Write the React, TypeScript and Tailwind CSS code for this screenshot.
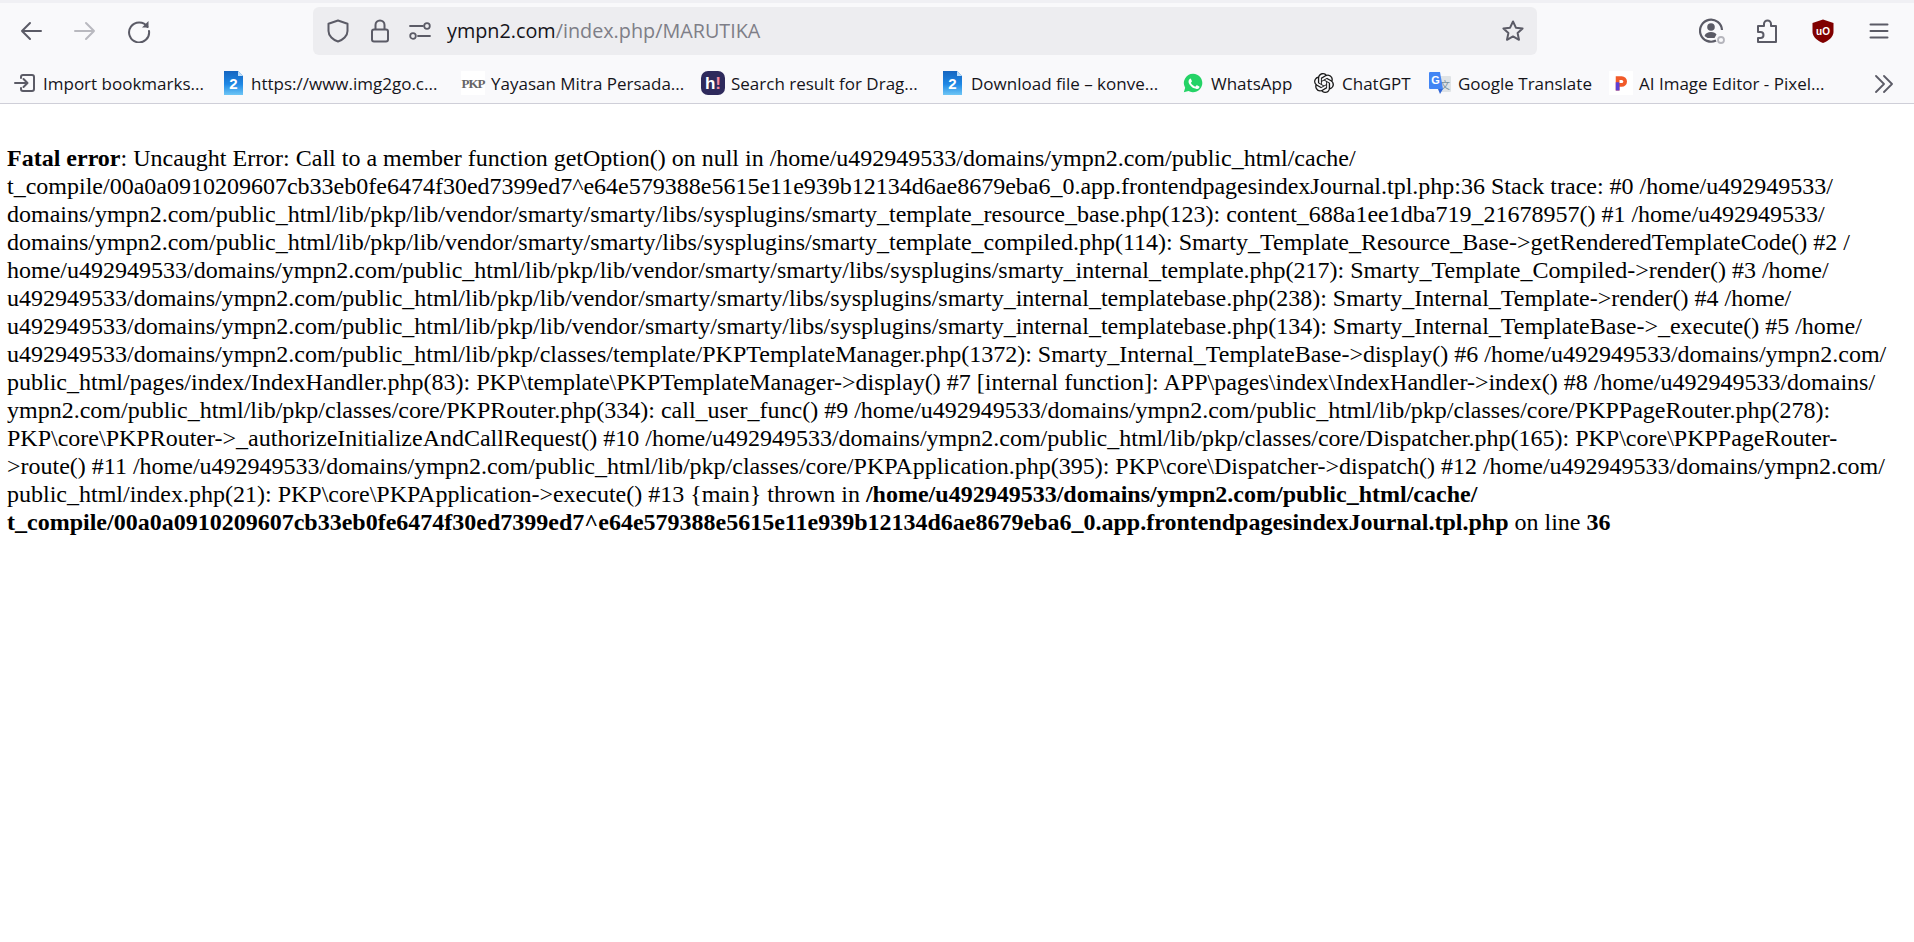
import React from 'react';
import { SiOpenai } from 'react-icons/si';

const stroke = '#5b5b66';

const Doc2Icon = () => (
  <svg viewBox="0 0 19 24" className="w-[19px] h-6 shrink-0">
    <defs>
      <linearGradient id="docBlue" x1="0" y1="0" x2="0" y2="1">
        <stop offset="0" stopColor="#1565c0" />
        <stop offset="0.55" stopColor="#1e88e5" />
        <stop offset="1" stopColor="#6ec6f5" />
      </linearGradient>
    </defs>
    <path d="M0 0h14l5 5v19H0z" fill="url(#docBlue)" />
    <path d="M14 0l5 5h-5z" fill="#bbdefb" />
    <text x="9.5" y="18" textAnchor="middle" fontSize="15" fontWeight="700" fill="#fff" fontFamily="Liberation Sans, sans-serif">2</text>
  </svg>
);

const bookmarks = [
  { label: 'Import bookmarks...', icon: 'import', box: 'w-[210px] gap-[7px]' },
  { label: 'https://www.img2go.c...', icon: 'doc', box: 'w-[237px] gap-[8px]' },
  { label: 'Yayasan Mitra Persada...', icon: 'pkp', box: 'w-[240px] gap-[6px]' },
  { label: 'Search result for Drag...', icon: 'hi', box: 'w-[242px] gap-[6px]' },
  { label: 'Download file – konve...', icon: 'doc', box: 'w-[240px] gap-[9px]' },
  { label: 'WhatsApp', icon: 'wa', box: 'w-[131px] gap-[8px]' },
  { label: 'ChatGPT', icon: 'gpt', box: 'w-[114px] gap-[8px]' },
  { label: 'Google Translate', icon: 'gt', box: 'w-[181px] gap-[6px]' },
  { label: 'AI Image Editor - Pixel...', icon: 'p', box: 'w-[240px] gap-[6px]' },
];

const BookmarkIcon = ({ kind }: { kind: string }) => {
  if (kind === 'import') {
    return (
      <svg viewBox="0 0 22 20" className="w-[22px] h-5 shrink-0" fill="none" stroke={stroke} strokeWidth="2" strokeLinecap="round" strokeLinejoin="round">
        <path d="M9 2h9a2 2 0 0 1 2 2v12a2 2 0 0 1-2 2H9a2 2 0 0 1-2-2v-1M7 5V4a2 2 0 0 1 2-2" />
        <path d="M1 10h12M9.5 6l4 4-4 4" />
      </svg>
    );
  }
  if (kind === 'doc') return <Doc2Icon />;
  if (kind === 'pkp') {
    return (
      <span className="w-6 h-6 shrink-0 bg-white flex items-center justify-center text-[13px] tracking-[-1px] leading-none font-bold text-[#666] font-['Liberation_Serif',serif]">PKP</span>
    );
  }
  if (kind === 'hi') {
    return (
      <span className="w-6 h-6 shrink-0 rounded-[7px] bg-[#2e2a5c] flex items-center justify-center text-[17px] leading-none font-bold text-white font-['Liberation_Sans',sans-serif]">
        h<span className="text-[#f58ba0]">!</span>
      </span>
    );
  }
  if (kind === 'wa') {
    return (
      <svg viewBox="0 0 24 24" className="w-5 h-5 shrink-0">
        <path d="M12 1a11 11 0 0 0-9.4 16.6L1 23l5.600-1.500A11 11 0 1 0 12 1z" fill="#25d366" />
        <path d="M8.600 6.600c-.3 0-.8.1-1.100.6-.4.5-1.300 1.400-1.300 3.200s1.300 3.600 1.500 3.800c.2.2 2.600 4 6.300 5.400 3 1.200 3.700.9 4.400.9.700-.1 2.100-.9 2.400-1.700.3-.8.3-1.600.2-1.700-.1-.2-.3-.3-.7-.5l-2.500-1.200c-.4-.1-.6-.2-.9.2l-1.200 1.400c-.2.3-.4.3-.8.1-1.100-.5-2.300-1-3.600-2.300-1-.9-1.600-2-1.800-2.400-.2-.4 0-.6.2-.8l.9-1.100c.2-.3.2-.5.100-.8l-1.200-2.800c-.3-.7-.6-.7-.9-.7z" fill="#fff" transform="translate(1.2 1.2) scale(0.88)" />
      </svg>
    );
  }
  if (kind === 'gpt') {
    return <SiOpenai className="w-5 h-5 shrink-0 text-[#1a1a1a]" />;
  }
  if (kind === 'gt') {
    return (
      <svg viewBox="0 0 24 24" className="w-6 h-6 shrink-0">
        <path d="M10 5h12a1 1 0 0 1 1 1v14a1 1 0 0 1-1 1H11z" fill="#dfe3e6" />
        <text x="17" y="18" textAnchor="middle" fontSize="10" fill="#78909c" fontFamily="Noto Sans CJK SC, sans-serif">文</text>
        <path d="M2 1h10l3 17H2a1 1 0 0 1-1-1V2a1 1 0 0 1 1-1z" fill="#4285f4" />
        <path d="M10 18h5l-3 5z" fill="#3367d6" />
        <text x="7.5" y="13" textAnchor="middle" fontSize="11" fontWeight="700" fill="#fff" fontFamily="Liberation Sans, sans-serif">G</text>
      </svg>
    );
  }
  return (
    <span className="w-6 h-6 shrink-0 bg-white flex items-center justify-center">
      <svg viewBox="0 0 24 24" className="w-[18px] h-5">
        <path d="M5 3h8a7 7 0 0 1 0 14h-3v5H5z" fill="#f15a29" />
        <path d="M5 11h5v11H5z" fill="#5b3fd6" />
        <path d="M10 8h3a2 2 0 0 1 0 4h-3z" fill="#fff" />
      </svg>
    </span>
  );
};

const lines: React.ReactNode[] = [
  <><b>Fatal error</b>: Uncaught Error: Call to a member function getOption() on null in /home/u492949533/domains/ympn2.com/public_html/cache/</>,
  't_compile/00a0a0910209607cb33eb0fe6474f30ed7399ed7^e64e579388e5615e11e939b12134d6ae8679eba6_0.app.frontendpagesindexJournal.tpl.php:36 Stack trace: #0 /home/u492949533/',
  'domains/ympn2.com/public_html/lib/pkp/lib/vendor/smarty/smarty/libs/sysplugins/smarty_template_resource_base.php(123): content_688a1ee1dba719_21678957() #1 /home/u492949533/',
  'domains/ympn2.com/public_html/lib/pkp/lib/vendor/smarty/smarty/libs/sysplugins/smarty_template_compiled.php(114): Smarty_Template_Resource_Base->getRenderedTemplateCode() #2 /',
  'home/u492949533/domains/ympn2.com/public_html/lib/pkp/lib/vendor/smarty/smarty/libs/sysplugins/smarty_internal_template.php(217): Smarty_Template_Compiled->render() #3 /home/',
  'u492949533/domains/ympn2.com/public_html/lib/pkp/lib/vendor/smarty/smarty/libs/sysplugins/smarty_internal_templatebase.php(238): Smarty_Internal_Template->render() #4 /home/',
  'u492949533/domains/ympn2.com/public_html/lib/pkp/lib/vendor/smarty/smarty/libs/sysplugins/smarty_internal_templatebase.php(134): Smarty_Internal_TemplateBase->_execute() #5 /home/',
  'u492949533/domains/ympn2.com/public_html/lib/pkp/classes/template/PKPTemplateManager.php(1372): Smarty_Internal_TemplateBase->display() #6 /home/u492949533/domains/ympn2.com/',
  'public_html/pages/index/IndexHandler.php(83): PKP\\template\\PKPTemplateManager->display() #7 [internal function]: APP\\pages\\index\\IndexHandler->index() #8 /home/u492949533/domains/',
  'ympn2.com/public_html/lib/pkp/classes/core/PKPRouter.php(334): call_user_func() #9 /home/u492949533/domains/ympn2.com/public_html/lib/pkp/classes/core/PKPPageRouter.php(278):',
  'PKP\\core\\PKPRouter->_authorizeInitializeAndCallRequest() #10 /home/u492949533/domains/ympn2.com/public_html/lib/pkp/classes/core/Dispatcher.php(165): PKP\\core\\PKPPageRouter-',
  '>route() #11 /home/u492949533/domains/ympn2.com/public_html/lib/pkp/classes/core/PKPApplication.php(395): PKP\\core\\Dispatcher->dispatch() #12 /home/u492949533/domains/ympn2.com/',
  <>public_html/index.php(21): PKP\core\PKPApplication-&gt;execute() #13 {'{'}main{'}'} thrown in <b>/home/u492949533/domains/ympn2.com/public_html/cache/</b></>,
  <><b>t_compile/00a0a0910209607cb33eb0fe6474f30ed7399ed7^e64e579388e5615e11e939b12134d6ae8679eba6_0.app.frontendpagesindexJournal.tpl.php</b> on line <b>36</b></>,
];

export default function App() {
  return (
    <div className="min-h-[942px] bg-white overflow-hidden">
      <div className="bg-[#f9f9fb] border-b border-[#cfcfd8] h-[104px] border-t-[3px] border-t-[#f0f0f4] font-['Open_Sans',sans-serif]">
        <div className="h-[56px] flex items-center">
          <div className="w-[313px] flex items-center pl-[19px] gap-[30px] shrink-0">
            <svg viewBox="0 0 24 24" className="w-6 h-6" fill="none" stroke={stroke} strokeWidth="2" strokeLinecap="round" strokeLinejoin="round"><path d="M22 12H3M11 4l-8 8 8 8" /></svg>
            <svg viewBox="0 0 24 24" className="w-6 h-6" fill="none" stroke="#b9b9bf" strokeWidth="2" strokeLinecap="round" strokeLinejoin="round"><path d="M2 12h19M13 4l8 8-8 8" /></svg>
            <svg viewBox="0 0 24 24" className="w-6 h-6" fill="none" stroke={stroke} strokeWidth="2" strokeLinecap="round" strokeLinejoin="round"><path d="M20.500 8A10 10 0 1 0 22 12" /><path d="M21.500 2v6.500H15" fill={stroke} stroke="none" /></svg>
          </div>
          <div className="w-[1224px] h-12 rounded-[6px] bg-[#ededf0] flex items-center pl-[13px] pr-[12px] shrink-0">
            <svg viewBox="0 0 24 24" className="w-6 h-6 shrink-0" fill="none" stroke={stroke} strokeWidth="2" strokeLinejoin="round"><path d="M12 1.500l9.500 3.200v7.300c0 5-4.500 9-9.500 10.500C7 21 2.500 17 2.500 12V4.700z" /></svg>
            <svg viewBox="0 0 24 24" className="w-6 h-6 ml-[18px] shrink-0" fill="none" stroke={stroke} strokeWidth="2"><rect x="4" y="10.500" width="16" height="12" rx="2" /><path d="M7.500 10.500V6a4.500 4.500 0 0 1 9 0v4.500" /></svg>
            <svg viewBox="0 0 24 24" className="w-6 h-6 ml-4 shrink-0" fill="none" stroke={stroke} strokeWidth="1.800" strokeLinecap="round"><circle cx="5" cy="17" r="2.800" /><circle cx="19" cy="7" r="2.800" /><path d="M2 7h13M10 17h12" /></svg>
            <span className="ml-[15px] text-[19.800px] leading-none whitespace-nowrap text-[#15141a]">ympn2.com<span className="text-[#7e7e87]">/index.php/MARUTIKA</span></span>
            <svg viewBox="0 0 24 24" className="w-6 h-6 ml-auto shrink-0" fill="none" stroke={stroke} strokeWidth="2" strokeLinejoin="round"><path d="M12 2.500l2.900 6.200 6.700.8-5 4.600 1.400 6.700-6-3.400-6 3.400 1.400-6.700-5-4.600 6.700-.8z" /></svg>
          </div>
          <div className="flex items-center flex-1 pl-[162px] gap-[32px]">
            <svg viewBox="0 0 26 26" className="w-[26px] h-[26px] -mr-[2px] shrink-0" fill="none" stroke={stroke} strokeWidth="2.200"><path d="M17 22.500A11 11 0 1 1 23 12" /><circle cx="12" cy="9" r="3.800" fill={stroke} stroke="none" /><path d="M5.500 18c1-3 3.500-4 6.500-4s4.500 1 5.500 2.500L15.500 20h-7z" fill={stroke} stroke="none" /><circle cx="22" cy="22" r="3" stroke="#b5b5bc" strokeWidth="1.800" /></svg>
            <svg viewBox="0 0 24 24" className="w-6 h-6 shrink-0" fill="none" stroke={stroke} strokeWidth="2" strokeLinejoin="round"><path d="M3 23h18V7h-5V5a3.500 3.500 0 0 0-7 0v2H3v6h2.500a3 3 0 0 1 0 6H3z" /></svg>
            <svg viewBox="0 0 24 24" className="w-6 h-6 shrink-0"><path d="M12 .5L22.500 4v9c0 5-5.500 9-10.500 11C7 22 1.500 18 1.500 13V4z" fill="#800000" /><text x="12" y="15.500" textAnchor="middle" fontSize="10" fontWeight="700" fill="#fff" fontFamily="Liberation Sans, sans-serif">uO</text></svg>
            <svg viewBox="0 0 24 24" className="w-6 h-6 shrink-0" fill="none" stroke={stroke} strokeWidth="2" strokeLinecap="round"><path d="M3.500 5.500h17M3.500 12h17M3.500 18.500h17" /></svg>
          </div>
        </div>
        <div className="h-[44px] pt-1 flex items-center relative pl-[14px] text-[17px] leading-none text-[#15141a] whitespace-nowrap">
          {bookmarks.map((b) => (
            <div key={b.label} className={`flex items-center shrink-0 ${b.box}`}>
              <BookmarkIcon kind={b.icon} />
              <span>{b.label}</span>
            </div>
          ))}
          <svg viewBox="0 0 20 18" className="absolute right-[20px] top-[16px] w-5 h-[18px]" fill="none" stroke={stroke} strokeWidth="1.800" strokeLinecap="round" strokeLinejoin="round"><path d="M2 1l8 8-8 8M10 1l8 8-8 8" /></svg>
        </div>
      </div>
      <div className="pt-[40px] pl-[7px] text-[24px] leading-[28px] text-black whitespace-nowrap font-['Liberation_Serif',serif]">
        {lines.map((l, i) => <div key={i}>{l}</div>)}
      </div>
    </div>
  );
}
